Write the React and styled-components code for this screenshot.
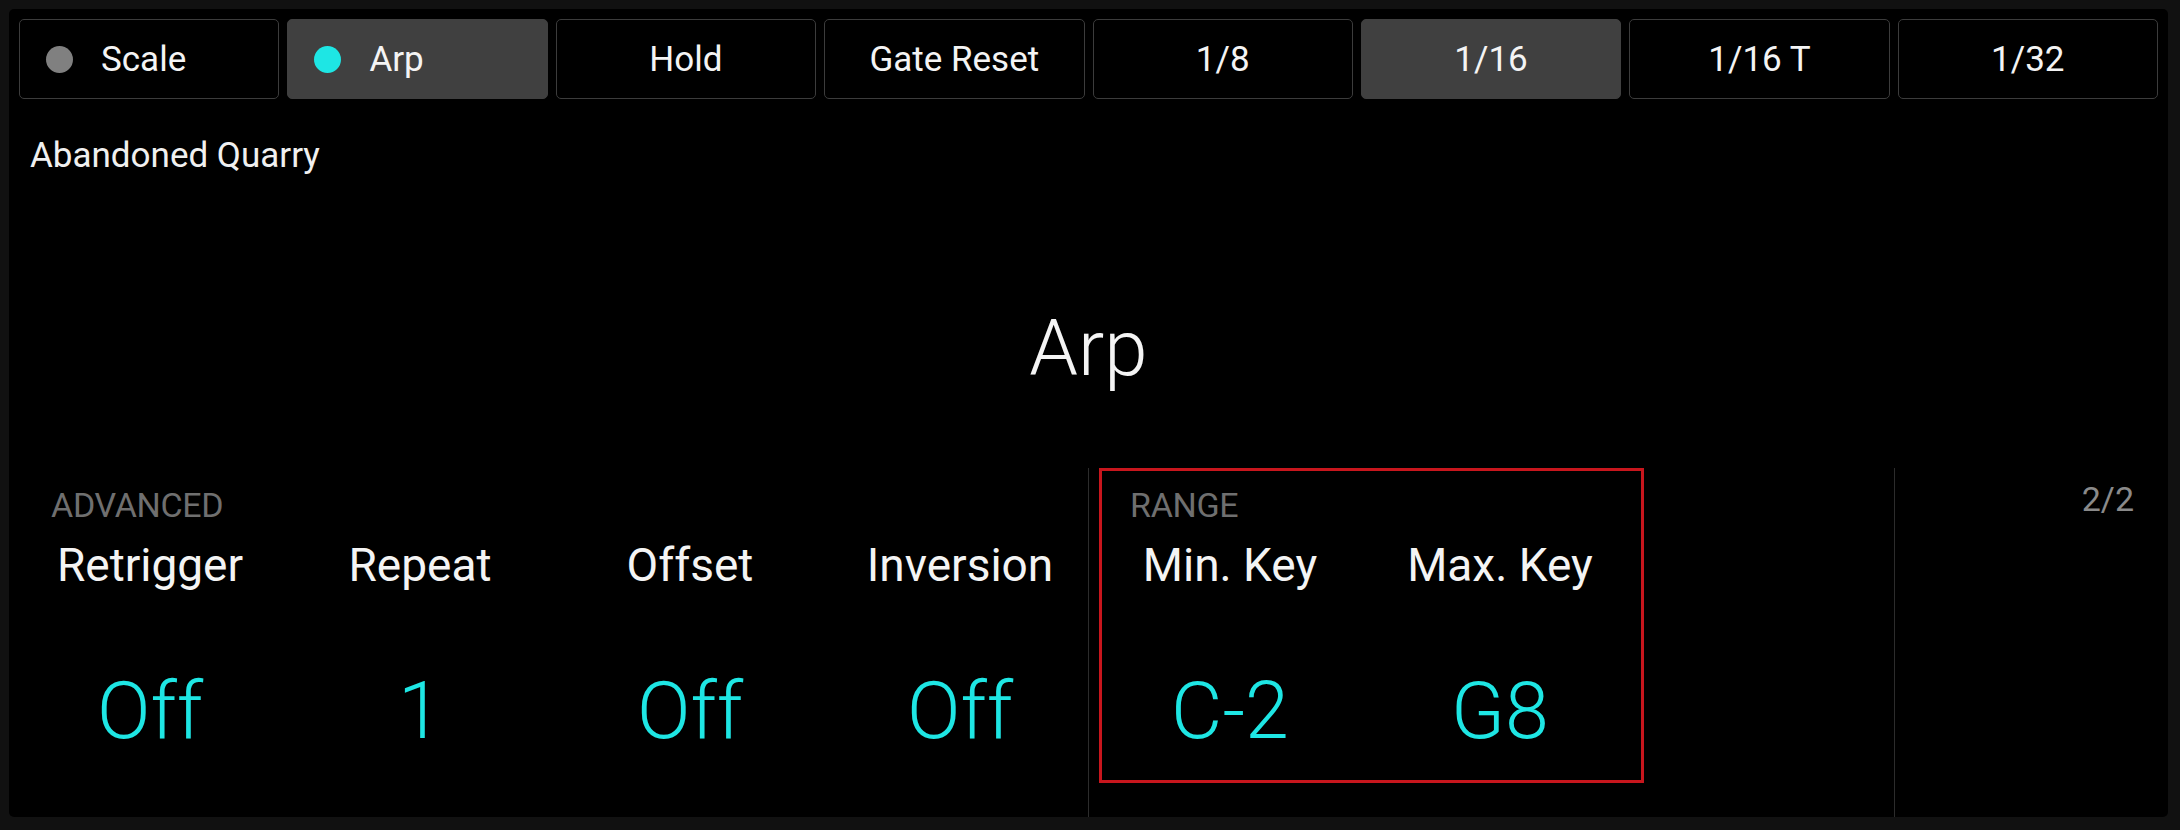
import React from "react";
import styled, { createGlobalStyle } from "styled-components";

const Global = createGlobalStyle`
  html, body { margin: 0; padding: 0; background: #111111; }
  body { font-family: Roboto, "Liberation Sans", sans-serif; color: #f2f2f2; }
  * { box-sizing: border-box; }
`;

const Frame = styled.div`
  width: 2180px;
  height: 830px;
  padding: 9px 12px 13px 9px;
  background: #111111;
`;

const Panel = styled.div`
  height: 100%;
  background: #000;
  border-radius: 5px;
  display: flex;
  flex-direction: column;
  overflow: hidden;
`;

const TabRow = styled.div`
  display: grid;
  grid-template-columns: repeat(8, minmax(0, 1fr));
  gap: 8px;
  padding: 10px 10px 0 10px;
`;

const Tab = styled.div`
  height: 80px;
  border-radius: 5px;
  border: 1px solid ${(p) => (p.$active ? "#404040" : "#3c3c3c")};
  background: ${(p) => (p.$active ? "#404040" : "#000")};
  display: flex;
  align-items: center;
  justify-content: ${(p) => (p.$dot ? "flex-start" : "center")};
  padding-left: ${(p) => (p.$dot ? "26px" : "0")};
  font-size: 35px;
  line-height: 1;
  color: #f4f4f4;
  white-space: nowrap;
`;

const Dot = styled.span`
  width: 27px;
  height: 27px;
  border-radius: 50%;
  background: ${(p) => p.$color};
  margin-right: 28px;
  flex: none;
`;

const Preset = styled.div`
  margin-top: 39px;
  padding-left: 21px;
  font-size: 35px;
  line-height: 1;
  color: #f0f0f0;
`;

const Heading = styled.div`
  margin-top: 137px;
  text-align: center;
  font-size: 78px;
  font-weight: 300;
  line-height: 1;
  color: #f4f4f4;
`;

const Sections = styled.div`
  margin-top: 80px;
  flex: 1;
  display: flex;
`;

const Group = styled.div`
  position: relative;
  width: ${(p) => p.$width}px;
  flex: none;
  border-right: ${(p) => (p.$divider ? "1px solid #2c2c2c" : "none")};
  padding-left: 6px;
  padding-top: 20px;
`;

const GroupTitle = styled.div`
  padding-left: ${(p) => p.$indent}px;
  font-size: 34px;
  line-height: 1;
  color: #6f6f6f;
  letter-spacing: -0.3px;
`;

const Params = styled.div`
  display: grid;
  grid-template-columns: repeat(${(p) => p.$count}, 270px);
  margin-top: 20px;
`;

const Param = styled.div`
  display: flex;
  flex-direction: column;
  align-items: center;
`;

const ParamName = styled.div`
  font-size: 46px;
  line-height: 1;
  color: #f4f4f4;
  white-space: nowrap;
`;

const ParamValue = styled.div`
  margin-top: 84px;
  font-size: 79px;
  font-weight: 300;
  line-height: 1;
  color: #1ee6e4;
  white-space: nowrap;
`;

const PageGroup = styled.div`
  flex: 1;
  padding-top: 14px;
  padding-right: 34px;
  text-align: right;
  font-size: 34px;
  line-height: 1;
  color: #8a8a8a;
`;

const Highlight = styled.div`
  position: absolute;
  left: 10px;
  top: 0;
  width: 545px;
  height: 315px;
  border: 3px solid #c8161d;
  pointer-events: none;
`;

const tabs = [
  { label: "Scale", dot: "#808080" },
  { label: "Arp", dot: "#1ee6e4", active: true },
  { label: "Hold" },
  { label: "Gate Reset" },
  { label: "1/8" },
  { label: "1/16", active: true },
  { label: "1/16 T" },
  { label: "1/32" },
];

const advanced = [
  ["Retrigger", "Off"],
  ["Repeat", "1"],
  ["Offset", "Off"],
  ["Inversion", "Off"],
];

const range = [
  ["Min. Key", "C-2"],
  ["Max. Key", "G8"],
];

export default function App() {
  return (
    <>
      <Global />
      <Frame>
        <Panel>
          <TabRow>
            {tabs.map((t) => (
              <Tab key={t.label} $active={t.active} $dot={!!t.dot}>
                {t.dot && <Dot $color={t.dot} />}
                {t.label}
              </Tab>
            ))}
          </TabRow>
          <Preset>Abandoned Quarry</Preset>
          <Heading>Arp</Heading>
          <Sections>
            <Group $width={1080} $divider>
              <GroupTitle $indent={36}>ADVANCED</GroupTitle>
              <Params $count={4}>
                {advanced.map(([n, v]) => (
                  <Param key={n}>
                    <ParamName>{n}</ParamName>
                    <ParamValue>{v}</ParamValue>
                  </Param>
                ))}
              </Params>
            </Group>
            <Group $width={806} $divider>
              <GroupTitle $indent={35}>RANGE</GroupTitle>
              <Params $count={2}>
                {range.map(([n, v]) => (
                  <Param key={n}>
                    <ParamName>{n}</ParamName>
                    <ParamValue>{v}</ParamValue>
                  </Param>
                ))}
              </Params>
              <Highlight />
            </Group>
            <PageGroup>2/2</PageGroup>
          </Sections>
        </Panel>
      </Frame>
    </>
  );
}
